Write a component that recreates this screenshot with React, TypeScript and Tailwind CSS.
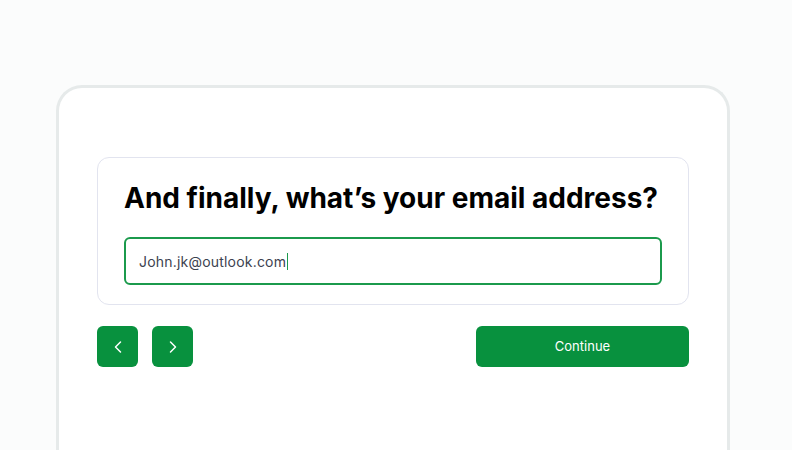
import React from "react";

export default function App() {
  return (
    <div className="h-[450px] w-[792px] overflow-hidden bg-[#fbfcfc] pt-[85px] pl-[56px]" style={{ fontFamily: "Inter, sans-serif" }}>
      <div className="h-[400px] w-[674px] rounded-t-[26px] border-[3px] border-b-0 border-[#e6eaea] bg-white px-[38px] pt-[69px]">
        <div className="rounded-[12px] border border-[#e2e4ef] bg-white px-[26px] pt-[22px] pb-[19px]">
          <h1 className="whitespace-nowrap text-[28px] font-bold leading-[36px] text-black">
            And finally, what’s your email address?
          </h1>
          <div className="mt-[21px] flex h-[48px] items-center rounded-[6px] border-2 border-[#1b9a4c] pl-[13px]">
            <span className="text-[14px] tracking-[0.2px] text-[#3c4250]">John.jk@outlook.com</span>
            <span className="ml-[1px] h-[17px] w-[1px] bg-[#1b9a4c]" />
          </div>
        </div>
        <div className="mt-[21px] flex items-center">
          <button className="flex h-[41px] w-[41px] items-center justify-center rounded-[6px] bg-[#08913e]">
            <svg width="20" height="20" viewBox="0 0 24 24" fill="none" stroke="white" strokeWidth="1.8" strokeLinecap="round" strokeLinejoin="round">
              <path d="M15 18l-6-6 6-6" />
            </svg>
          </button>
          <button className="ml-[14px] flex h-[41px] w-[41px] items-center justify-center rounded-[6px] bg-[#08913e]">
            <svg width="20" height="20" viewBox="0 0 24 24" fill="none" stroke="white" strokeWidth="1.8" strokeLinecap="round" strokeLinejoin="round">
              <path d="M9 18l6-6-6-6" />
            </svg>
          </button>
          <button className="ml-auto flex h-[41px] w-[213px] items-center justify-center rounded-[6px] bg-[#08913e] text-[13px] font-normal text-white">
            Continue
          </button>
        </div>
      </div>
    </div>
  );
}
